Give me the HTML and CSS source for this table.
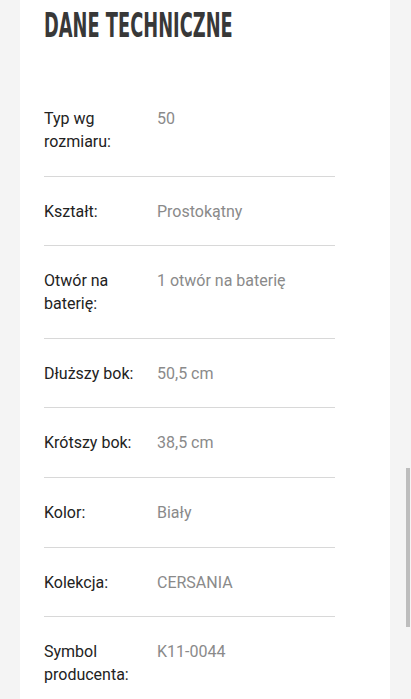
FILE: index.html
```html
<!DOCTYPE html>
<html lang="pl">
<head>
  <meta charset="UTF-8">
  <meta name="viewport" content="width=device-width, initial-scale=1.0">
  <title>Dane techniczne</title>
  <link rel="stylesheet" href="styles.css">
</head>
<body>
  <main class="card">
    <h2 class="card-title"><span>DANE TECHNICZNE</span></h2>

    <table class="specs">
      <tr>
        <th>Typ wg rozmiaru:</th>
        <td>50</td>
      </tr>
      <tr>
        <th>Kształt:</th>
        <td>Prostokątny</td>
      </tr>
      <tr>
        <th>Otwór na baterię:</th>
        <td>1 otwór na baterię</td>
      </tr>
      <tr>
        <th>Dłuższy bok:</th>
        <td>50,5 cm</td>
      </tr>
      <tr>
        <th>Krótszy bok:</th>
        <td>38,5 cm</td>
      </tr>
      <tr>
        <th>Kolor:</th>
        <td>Biały</td>
      </tr>
      <tr>
        <th>Kolekcja:</th>
        <td>CERSANIA</td>
      </tr>
      <tr>
        <th>Symbol producenta:</th>
        <td>K11-0044</td>
      </tr>
    </table>
  </main>

  <div class="scroll-thumb"></div>
</body>
</html>
```

FILE: styles.css
```css
body {
  margin: 0;
  background: #f4f4f4;
  font-family: Roboto, "Liberation Sans", sans-serif;
  overflow: hidden;
}

.card {
  margin: 0 21px 0 20px;
  padding: 0 24px;
  background: #fff;
  min-height: 699px;
}

.card-title {
  margin: 0;
  padding-top: 6px;
  height: 78px;
  font-family: "DejaVu Sans", sans-serif;
  font-stretch: condensed;
  font-weight: bold;
  font-size: 33px;
  line-height: 40px;
  color: #383838;
  white-space: nowrap;
}

.card-title span {
  display: inline-block;
  transform: scaleX(0.6);
  transform-origin: left center;
}

.specs {
  width: 291px;
  border-collapse: collapse;
  font-size: 16px;
  line-height: 23px;
}

.specs tr {
  border-bottom: 1px solid #d8d8d8;
}

.specs tr:last-child {
  border-bottom: 0;
}

.specs th,
.specs td {
  padding: 23px 0 22.6px;
  text-align: left;
  vertical-align: top;
  font-weight: normal;
}

.specs th {
  width: 100px;
  padding-right: 13px;
  color: #222;
}

.specs td {
  color: #8a8a8a;
}

.scroll-thumb {
  position: fixed;
  right: 1px;
  top: 468px;
  width: 4px;
  height: 159px;
  background: #bdbdbd;
}
```
